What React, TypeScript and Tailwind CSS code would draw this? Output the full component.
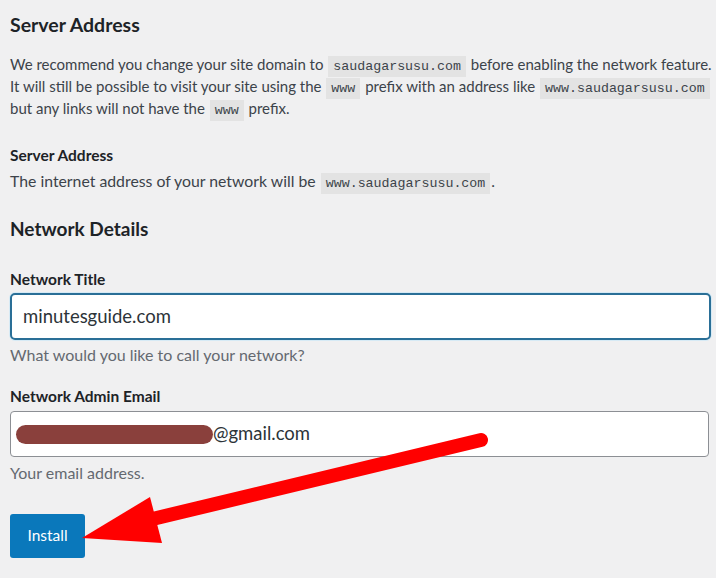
import React from 'react'

const Code = ({ children }: { children: React.ReactNode }) => (
  <code className="bg-[#e3e3e3] px-[5px] py-[3px] mx-[1px] text-[13.3px] leading-[14px] text-[#3c434a] font-['Liberation_Mono',monospace]">
    {children}
  </code>
)

const Arrow = () => (
  <svg className="absolute left-0 top-0 pointer-events-none" width="716" height="578" viewBox="0 0 716 578">
    <line x1="481" y1="440" x2="140" y2="522" stroke="#ff0000" strokeWidth="14" strokeLinecap="round" />
    <polygon points="82,538 150,497 162,543" fill="#ff0000" />
  </svg>
)

const App = () => {
  return (
    <div className="relative w-[716px] h-[578px] overflow-hidden bg-[#f0f0f1] text-[#3c434a] font-['Lato','Noto_Sans',sans-serif] px-[10px] whitespace-nowrap">
      <h2 className="text-[19.5px] font-bold text-[#1d2327] pt-[11px] leading-[28px]">Server Address</h2>

      <p className="mt-[14px] text-[15px] leading-[22px]">
        We recommend you change your site domain to <Code>saudagarsusu.com</Code> before enabling the network feature.
        <br />
        It will still be possible to visit your site using the <Code>www</Code> prefix with an address like{' '}
        <Code>www.saudagarsusu.com</Code>
        <br />
        but any links will not have the <Code>www</Code> prefix.
      </p>

      <h3 className="mt-[25px] text-[15.5px] font-bold text-[#1d2327] leading-[22px]">Server Address</h3>
      <p className="mt-[4px] text-[15.8px] leading-[22px]">
        The internet address of your network will be <Code>www.saudagarsusu.com</Code>.
      </p>

      <h2 className="mt-[24px] text-[19px] font-bold text-[#1d2327] leading-[26px]">Network Details</h2>

      <div className="mt-[27px] flex flex-col">
        <label className="text-[15.5px] font-bold text-[#1d2327] leading-[20px]">Network Title</label>
        <div className="mt-[4px] h-[47px] w-[701px] bg-white border-2 border-[#2a6f97] rounded-[5px] shadow-[0_0_0_1px_#d6eaf5] flex items-center px-[11px] text-[18.5px] text-[#2c3338]">
          minutesguide.com
        </div>
        <p className="mt-[5px] text-[16px] leading-[20px] text-[#646970]">What would you like to call your network?</p>
      </div>

      <div className="mt-[21px] flex flex-col">
        <label className="text-[15.5px] font-bold text-[#1d2327] leading-[20px]">Network Admin Email</label>
        <div className="mt-[5px] h-[46px] w-[699px] bg-white border border-[#8c8f94] rounded-[4px] flex items-center pl-[5px] text-[18.5px] text-[#2c3338]">
          <span className="inline-block w-[197px] h-[19px] rounded-full bg-[#8a403c]" />
          <span>@gmail.com</span>
        </div>
        <p className="mt-[6px] text-[16px] leading-[20px] text-[#646970]">Your email address.</p>
      </div>

      <button className="mt-[31px] w-[75px] h-[44px] rounded-[3px] bg-[#0a78bb] text-white text-[15.5px]">
        Install
      </button>

      <Arrow />
    </div>
  )
}

export default App
